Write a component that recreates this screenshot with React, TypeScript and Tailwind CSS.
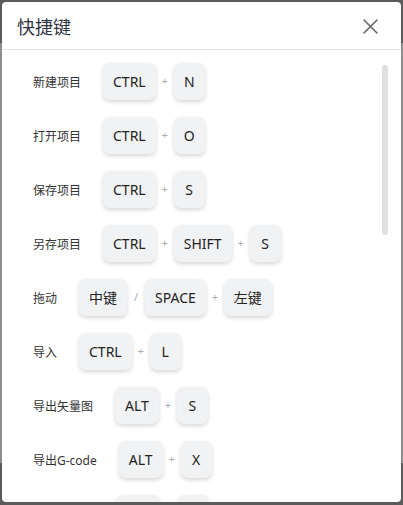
import React from "react";

type Row = { label: string; keys: string[]; seps: string[] };

const rows: Row[] = [
  { label: "新建项目", keys: ["CTRL", "N"], seps: ["+"] },
  { label: "打开项目", keys: ["CTRL", "O"], seps: ["+"] },
  { label: "保存项目", keys: ["CTRL", "S"], seps: ["+"] },
  { label: "另存项目", keys: ["CTRL", "SHIFT", "S"], seps: ["+", "+"] },
  { label: "拖动", keys: ["中键", "SPACE", "左键"], seps: ["/", "+"] },
  { label: "导入", keys: ["CTRL", "L"], seps: ["+"] },
  { label: "导出矢量图", keys: ["ALT", "S"], seps: ["+"] },
  { label: "导出G-code", keys: ["ALT", "X"], seps: ["+"] },
  { label: "导出PNG图", keys: ["ALT", "P"], seps: ["+"] },
];

function Key({ k }: { k: string }) {
  return (
    <div className="h-[37px] min-w-[31px] px-[10px] flex items-center justify-center rounded-[7px] bg-[#f1f2f4] text-[14px] text-[#222] shadow-[0_2px_4px_rgba(0,0,0,0.16)]">
      {k}
    </div>
  );
}

export default function App() {
  return (
    <div
      className="w-[403px] h-[505px] overflow-hidden pt-[2px] pl-[2px] bg-[linear-gradient(to_bottom,#5b5b5b_43px,#8e8e8e_43px,#8e8e8e_463px,#5b5b5b_463px)]"
      style={{ fontFamily: '"Noto Sans", "Noto Sans CJK SC", sans-serif' }}
    >
      <div className="relative w-[399px] h-[500px] bg-white rounded-[4px] overflow-hidden flex flex-col">
        <div className="h-[48px] shrink-0 flex items-center justify-between pl-[15px] pr-[23px] pt-[4px] border-b border-[#e3e3e8]">
          <div className="text-[18px] text-[#2f3440]">快捷键</div>
          <svg width="15" height="15" viewBox="0 0 15 15" className="mt-[-2px]">
            <path d="M1 1 L14 14 M14 1 L1 14" stroke="#666" strokeWidth="1.6" strokeLinecap="round" />
          </svg>
        </div>
        <div className="flex-1 overflow-hidden pt-[4px]">
          {rows.map((r) => (
            <div key={r.label} className="h-[54px] flex items-center pl-[31px]">
              <div className="text-[12px] text-[#333] mr-[22px] mt-[3px] whitespace-nowrap">{r.label}</div>
              <div className="flex items-center">
                {r.keys.map((k, i) => (
                  <React.Fragment key={i}>
                    {i > 0 && (
                      <span className="w-[18px] text-center text-[11px] text-[#a9adb8]">{r.seps[i - 1]}</span>
                    )}
                    <Key k={k} />
                  </React.Fragment>
                ))}
              </div>
            </div>
          ))}
        </div>
        <div className="absolute left-[380px] top-[63px] w-[6px] h-[170px] rounded-full bg-[#e0e0e0]" />
      </div>
    </div>
  );
}
